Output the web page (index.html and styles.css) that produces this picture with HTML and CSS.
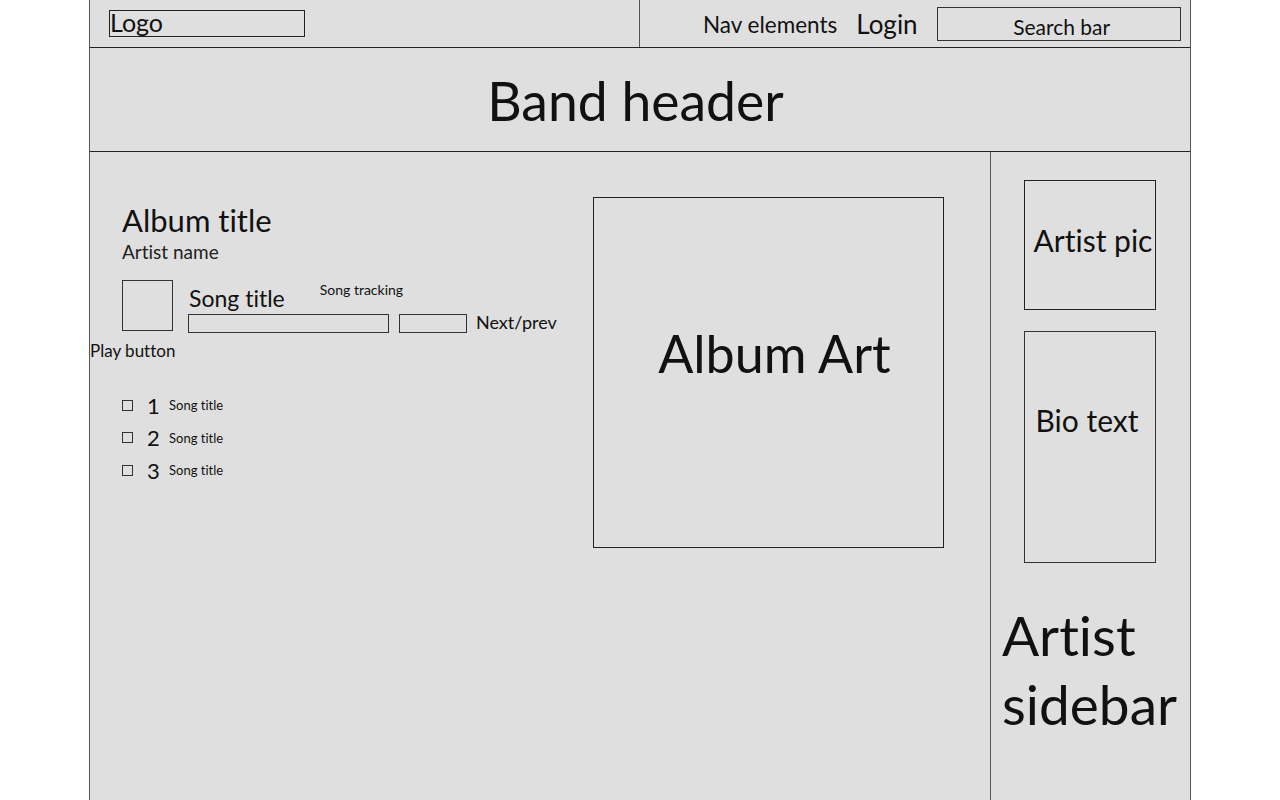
FILE: index.html
```html
<!DOCTYPE html>
<html lang="en">
<head>
    <meta charset="UTF-8">
    <meta name="viewport" content="width=device-width, initial-scale=1.0">
    <title>Band Page Wireframe</title>
    <link rel="stylesheet" href="styles.css">
</head>
<body>
    <div class="page">
        <header class="topbar">
            <div class="topbar-left">
                <div class="logo">Logo</div>
            </div>
            <nav class="topbar-right">
                <span class="nav-text">Nav elements</span>
                <span class="login">Login</span>
                <div class="search">Search bar</div>
            </nav>
        </header>

        <section class="band-header">Band header</section>

        <div class="main">
            <main class="content">
                <div class="album-info">
                    <h1 class="album-title">Album title</h1>
                    <div class="artist-name">Artist name</div>

                    <div class="player">
                        <div class="play-box"></div>
                        <div class="player-body">
                            <div class="player-top">
                                <span class="song-title">Song title</span>
                                <span class="song-tracking">Song tracking</span>
                            </div>
                            <div class="player-bars">
                                <div class="progress"></div>
                                <div class="skip"></div>
                                <span class="next-prev">Next/prev</span>
                            </div>
                        </div>
                    </div>
                    <div class="play-label">Play button</div>

                    <ul class="tracks">
                        <li><span class="check"></span><span class="num">1</span><span class="track-name">Song title</span></li>
                        <li><span class="check"></span><span class="num">2</span><span class="track-name">Song title</span></li>
                        <li><span class="check"></span><span class="num">3</span><span class="track-name">Song title</span></li>
                    </ul>
                </div>

                <div class="album-art">Album Art</div>
            </main>

            <aside class="sidebar">
                <div class="artist-pic">Artist pic</div>
                <div class="bio">Bio text</div>
                <div class="sidebar-label">Artist sidebar</div>
            </aside>
        </div>
    </div>
</body>
</html>
```

FILE: styles.css
```css
body {
    margin: 0;
    padding: 0;
    background-color: #fff;
    font-family: Lato, "Open Sans", sans-serif;
    font-variant-ligatures: none;
    color: #111;
}
.page {
    width: 1100px;
    height: 800px;
    margin: 0 auto;
    background-color: #dfdfdf;
    border-left: 1px solid #555;
    border-right: 1px solid #555;
    display: flex;
    flex-direction: column;
}

/* top bar */
.topbar {
    height: 47px;
    border-bottom: 1px solid #222;
    display: flex;
}
.topbar-left {
    width: 550px;
    border-right: 1px solid #555;
    padding: 10px 0 0 19px;
    box-sizing: border-box;
}
.logo {
    width: 196px;
    height: 27px;
    box-sizing: border-box;
    border: 1px solid #222;
    font-size: 25px;
    line-height: 22px;
}
.topbar-right {
    flex: 1;
    display: flex;
    align-items: center;
    padding-left: 63px;
}
.nav-text {
    font-size: 22.5px;
    margin-top: 2px;
}
.login {
    font-size: 26px;
    margin-left: 19px;
}
.search {
    margin-left: 19px;
    width: 244px;
    height: 34px;
    box-sizing: border-box;
    border: 1px solid #333;
    font-size: 21px;
    text-align: center;
    line-height: 38px;
    padding-left: 6px;
}

/* band header */
.band-header {
    height: 103px;
    border-bottom: 1px solid #222;
    text-align: center;
    font-size: 53.5px;
    line-height: 104px;
    padding-right: 9px;
}

/* main area */
.main {
    flex: 1;
    display: flex;
}
.content {
    width: 900px;
    display: flex;
    padding: 0 0 0 32px;
    box-sizing: border-box;
}
.album-info {
    width: 471px;
    padding-top: 48px;
}
.album-title {
    margin: 0;
    font-weight: normal;
    font-size: 31px;
    line-height: 40px;
}
.artist-name {
    font-size: 19px;
    line-height: 24px;
    margin-top: 0;
    color: #222;
}
.player {
    display: flex;
    margin-top: 16px;
}
.play-box {
    width: 51px;
    height: 51px;
    box-sizing: border-box;
    border: 1px solid #333;
}
.player-body {
    margin-left: 15px;
}
.player-top {
    display: flex;
    align-items: flex-start;
    height: 31px;
}
.song-title {
    font-size: 23px;
    line-height: 30px;
    margin: 3px 0 0 1px;
}
.song-tracking {
    font-size: 14px;
    line-height: 16px;
    margin: 2px 0 0 35px;
}
.player-bars {
    display: flex;
    align-items: flex-end;
}
.progress {
    width: 201px;
    height: 19px;
    box-sizing: border-box;
    border: 1px solid #333;
}
.skip {
    width: 68px;
    height: 19px;
    box-sizing: border-box;
    border: 1px solid #333;
    margin-left: 10px;
}
.next-prev {
    font-size: 18px;
    line-height: 22px;
    margin-left: 9px;
}
.play-label {
    font-size: 17px;
    line-height: 20px;
    margin: 8px 0 0 -32px;
}
.tracks {
    list-style: none;
    margin: 28px 0 0;
    padding: 0;
}
.tracks li {
    display: flex;
    align-items: center;
    height: 32.5px;
}
.check {
    width: 11px;
    height: 11px;
    box-sizing: border-box;
    border: 1px solid #333;
}
.num {
    font-size: 22px;
    width: 22px;
    margin-left: 14px;
}
.track-name {
    font-size: 13px;
}

.album-art {
    width: 351px;
    height: 351px;
    margin-top: 45px;
    box-sizing: border-box;
    border: 1px solid #222;
    display: flex;
    align-items: center;
    justify-content: center;
    font-size: 52px;
    padding: 0 0 40px 12px;
}

/* sidebar */
.sidebar {
    flex: 1;
    border-left: 1px solid #555;
    padding: 28px 0 0 33px;
}
.artist-pic {
    width: 132px;
    height: 130px;
    box-sizing: border-box;
    border: 1px solid #222;
    display: flex;
    align-items: center;
    justify-content: center;
    font-size: 30px;
    padding: 0 0 10px 6px;
}
.bio {
    width: 132px;
    height: 232px;
    margin-top: 21px;
    box-sizing: border-box;
    border: 1px solid #333;
    font-size: 30px;
    text-align: center;
    padding: 70px 6px 0 0;
}
.sidebar-label {
    font-size: 55px;
    line-height: 69px;
    margin: 38px 0 0 -22px;
}
```
